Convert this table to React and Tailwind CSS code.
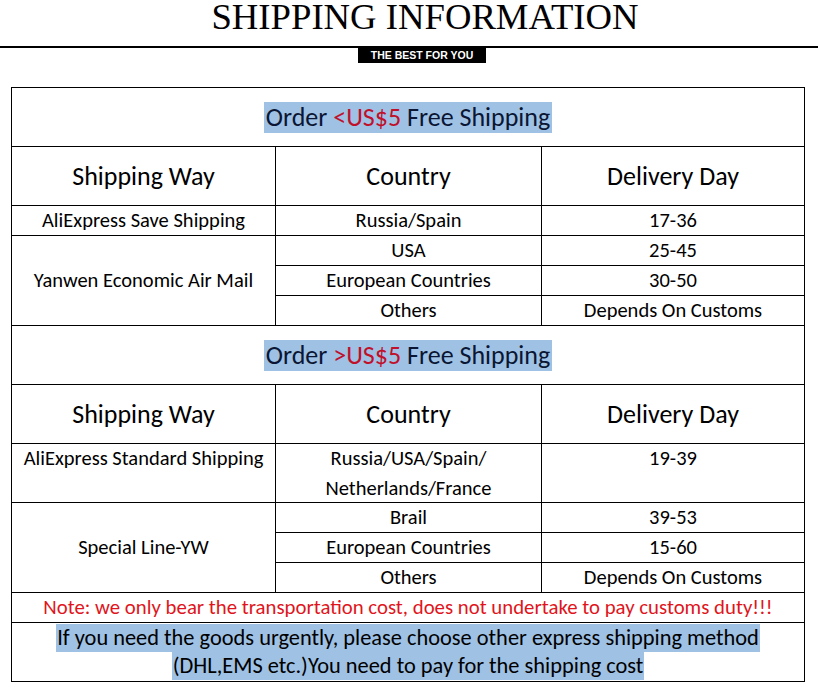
import React from "react";

const base = "border-r border-b border-black flex items-center justify-center text-center";
const c = `${base} text-black`;

function Row3({ a, b, d }) {
  return (
    <>
      <div className={c}>{a}</div>
      <div className={c}>{b}</div>
      <div className={c}>{d}</div>
    </>
  );
}

function OrderRow({ sign }) {
  return (
    <div className={`${base} col-span-3 text-[26px]`}>
      <span className="inline-block bg-[#9fc1e4] leading-[31px] px-[2px] text-[#0a1633]">
        Order <span className="text-[#c0102a]">{sign}US$5</span> Free Shipping
      </span>
    </div>
  );
}

function Headers() {
  return (
    <>
      <div className={`${c} text-[26px]`}>Shipping Way</div>
      <div className={`${c} text-[26px]`}>Country</div>
      <div className={`${c} text-[26px]`}>Delivery Day</div>
    </>
  );
}

export default function App() {
  return (
    <div className="w-[818px] h-[688px] bg-white overflow-hidden">
      <div className="h-[46px] flex justify-center pl-[32px]">
        <div className="[font-family:'Liberation_Serif',serif] text-[36.7px] leading-[34px] text-black">
          SHIPPING INFORMATION
        </div>
      </div>
      <div className="h-[2px] bg-black" />
      <div className="flex justify-center pl-[26px]">
        <div className="w-[128px] h-[15px] bg-black text-white font-bold text-[10.5px] leading-[15px] text-center [font-family:'Liberation_Sans',sans-serif]">
          THE BEST FOR YOU
        </div>
      </div>
      <div className="mt-[24px] ml-[11px] w-[794px] border-l border-t border-black grid grid-cols-[264px_266px_263px] grid-rows-[59px_59px_30px_30px_30px_30px_59px_59px_59px_30px_30px_30px_30px_59px] [font-family:Carlito,Calibri,Lato,sans-serif] text-[20.5px]">
        <OrderRow sign="<" />
        <Headers />
        <Row3 a="AliExpress Save Shipping" b="Russia/Spain" d="17-36" />
        <div className={`${c} row-span-3`}>Yanwen Economic Air Mail</div>
        <div className={c}>USA</div>
        <div className={c}>25-45</div>
        <div className={c}>European Countries</div>
        <div className={c}>30-50</div>
        <div className={c}>Others</div>
        <div className={c}>Depends On Customs</div>
        <OrderRow sign=">" />
        <Headers />
        <div className="border-r border-b border-black text-center text-black leading-[29.5px]">AliExpress Standard Shipping</div>
        <div className="border-r border-b border-black text-center text-black leading-[29.5px]">
          Russia/USA/Spain/
          <br />
          Netherlands/France
        </div>
        <div className="border-r border-b border-black text-center text-black leading-[29.5px]">19-39</div>
        <div className={`${c} row-span-3`}>Special Line-YW</div>
        <div className={c}>Brail</div>
        <div className={c}>39-53</div>
        <div className={c}>European Countries</div>
        <div className={c}>15-60</div>
        <div className={c}>Others</div>
        <div className={c}>Depends On Customs</div>
        <div className={`${base} col-span-3 text-[#e0151c] text-[20.8px]`}>
          Note: we only bear the transportation cost, does not undertake to pay customs duty!!!
        </div>
        <div className="col-span-3 border-r border-b border-black flex flex-col items-center justify-center text-[22.4px] text-black">
          <span className="inline-block bg-[#9fc1e4] h-[28px] leading-[28px] px-[1px]">
            If you need the goods urgently, please choose other express shipping method
          </span>
          <span className="inline-block bg-[#9fc1e4] h-[28px] leading-[28px] px-[1px]">
            (DHL,EMS etc.)You need to pay for the shipping cost
          </span>
        </div>
      </div>
    </div>
  );
}
